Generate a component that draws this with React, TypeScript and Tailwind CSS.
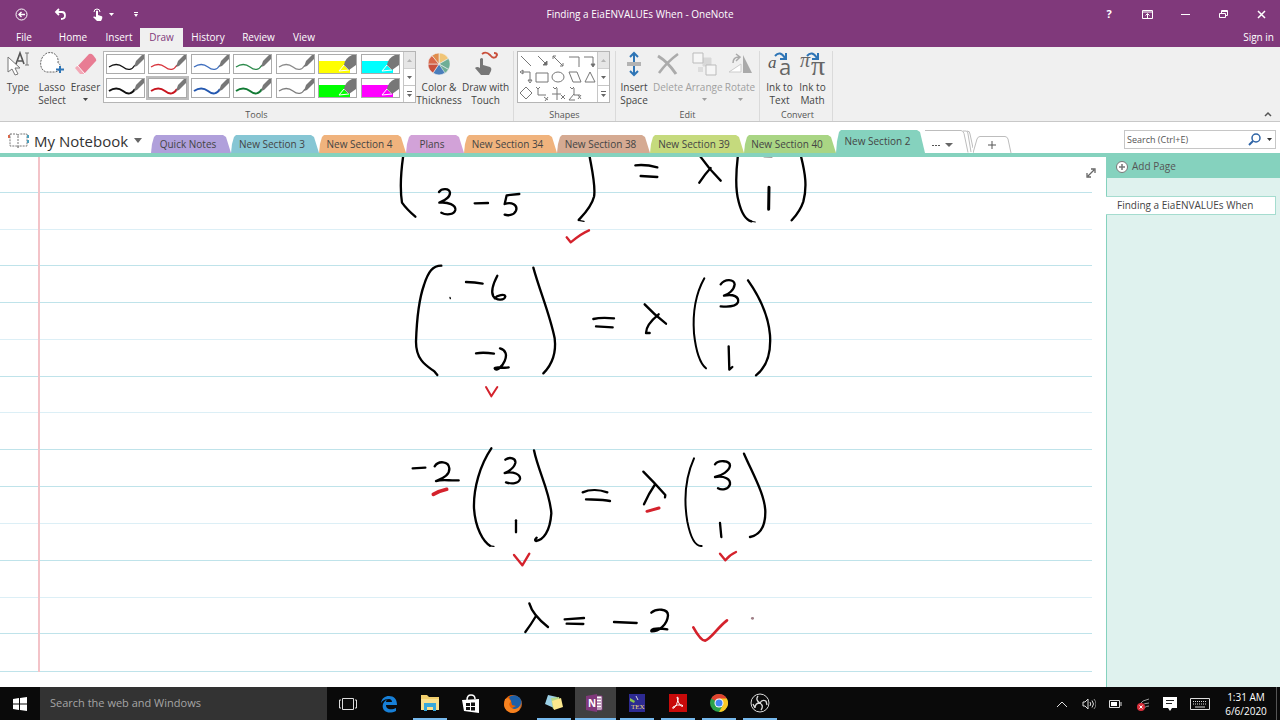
import React, { useState } from 'react';
import clsx from 'clsx';

type Stroke = { d: string; color?: string; width?: number };
type InkGroup = { x: number; y: number; strokes: Stroke[] };

const RED = '#d4222c';

const menuTabs = [
  { label: 'File', width: 'w-12' },
  { label: 'Home', width: 'w-[50px]' },
  { label: 'Insert', width: 'w-[42px]' },
  { label: 'Draw', width: 'w-[43px]' },
  { label: 'History', width: 'w-[50px]' },
  { label: 'Review', width: 'w-[51px]' },
  { label: 'View', width: 'w-10' },
];

const pens = [
  { color: '#111111', width: 1 },
  { color: '#d8343c', width: 1 },
  { color: '#3f6fbf', width: 1 },
  { color: '#2c8a4b', width: 1 },
  { color: '#8a8a8a', width: 1 },
  { color: '#ffff00', marker: true },
  { color: '#00ffff', marker: true },
  { color: '#111111', width: 2 },
  { color: '#c8141e', width: 2 },
  { color: '#2458b0', width: 2 },
  { color: '#117a34', width: 2 },
  { color: '#7d7d7d', width: 1 },
  { color: '#00ff00', marker: true },
  { color: '#ff00ff', marker: true },
];

const sections = [
  { label: 'Quick Notes', bg: 'bg-[#b0a0db]', width: 'w-20' },
  { label: 'New Section 3', bg: 'bg-[#86c6d4]', width: 'w-[88px]' },
  { label: 'New Section 4', bg: 'bg-[#f0b37d]', width: 'w-[87px]' },
  { label: 'Plans', bg: 'bg-[#d2a2d8]', width: 'w-[58px]' },
  { label: 'New Section 34', bg: 'bg-[#f0b37d]', width: 'w-[93px]' },
  { label: 'New Section 38', bg: 'bg-[#d5aa92]', width: 'w-[93px]' },
  { label: 'New Section 39', bg: 'bg-[#c5da7d]', width: 'w-[94px]' },
  { label: 'New Section 40', bg: 'bg-[#a9d584]', width: 'w-[92px]' },
  { label: 'New Section 2', bg: 'bg-[#85d2be]', width: 'w-[89px]' },
];

const ruleLines = [192, 229, 265, 302, 339, 376, 412, 449, 486, 523, 560, 597, 633, 671];
const paleRules = [229, 339, 412, 523, 597];

// Pen strokes are stored at three units per page pixel, relative to each group's corner
const ink: InkGroup[] = [
  {
    x: 390,
    y: 150,
    strokes: [
      { d: 'M40 15C32 70 30 120 36 158Q50 178 76 200' },
      { d: 'M147 126C155 114 178 114 180 128C180 145 160 152 148 158C175 155 198 165 196 180C192 195 168 196 154 188' },
      { d: 'M254 160L294 159' },
      { d: 'M388 132L350 136L344 162C365 155 384 165 378 182C372 197 352 197 344 194' },
      { d: 'M598 15C606 60 618 110 612 140C604 172 575 200 566 210' },
      { d: 'M566 211L582 214', width: 4 },
      { d: 'M736 46C760 43 780 46 802 52M752 78L802 81' },
      { d: 'M928 15Q955 55 992 92M962 54Q945 72 928 98' },
      { d: 'M1044 15C1036 80 1036 120 1046 155C1056 195 1070 210 1084 214' },
      { d: 'M1084 214L1096 216', width: 3 },
      { d: 'M1122 21L1146 22', width: 3, color: '#888888' },
      { d: 'M1137 112L1136 178', width: 9 },
      { d: 'M1232 15C1246 70 1252 110 1240 155C1230 185 1215 200 1205 211' },
      { d: 'M530 262L542 277C560 262 580 248 597 241', color: RED },
    ],
  },
  {
    x: 400,
    y: 255,
    strokes: [
      { d: 'M124 32C98 32 85 50 72 90C56 135 50 200 48 260C48 320 85 335 104 350L112 360' },
      { d: 'M198 81Q225 82 248 86' },
      { d: 'M292 62C280 85 272 110 280 124C290 138 314 136 316 124C314 116 292 120 284 130' },
      { d: 'M150 127L151 131', width: 4 },
      { d: 'M400 38C420 110 450 180 464 250C470 300 455 330 430 355' },
      { d: 'M228 295Q250 291 282 296' },
      { d: 'M300 280C318 285 322 300 314 318C306 338 286 350 284 340C286 332 310 342 326 337' },
      { d: 'M580 192C600 187 620 188 642 190M588 214L638 217' },
      { d: 'M734 148Q762 178 798 206M776 178C755 195 738 215 738 234L749 234' },
      { d: 'M913 70C885 120 878 180 882 235C888 290 900 325 918 340', width: 6 },
      { d: 'M962 88C975 70 1002 72 1004 88C1002 106 985 118 972 122C1000 116 1018 125 1014 142C1008 156 985 156 962 154' },
      { d: 'M986 274L988 344L997 336' },
      { d: 'M1044 76C1075 120 1105 180 1110 240C1114 300 1095 340 1068 361' },
      { d: 'M258 396L274 424L292 396', color: RED, width: 6 },
    ],
  },
  {
    x: 400,
    y: 435,
    strokes: [
      { d: 'M38 100L76 98' },
      { d: 'M104 94C115 76 146 78 148 100C150 120 130 130 108 138C130 132 150 138 176 136' },
      { d: 'M100 178Q118 168 140 163', color: RED, width: 11 },
      { d: 'M274 40C240 90 220 160 222 220C226 280 250 320 270 332' },
      { d: 'M268 331Q275 334 282 334', width: 4 },
      { d: 'M316 74C330 64 348 70 346 84C342 100 328 108 314 114C340 108 362 118 360 132C356 146 336 148 318 142' },
      { d: 'M348 256L348 292' },
      { d: 'M402 46C415 110 450 170 454 235C450 290 430 315 408 318Q402 315 410 308' },
      { d: 'M342 360L367 391L388 356', color: RED },
      { d: 'M548 172C570 162 600 164 622 172M558 193C580 194 610 194 630 198' },
      { d: 'M730 110Q765 145 796 180L795 187M764 150C750 170 740 190 732 208' },
      { d: 'M741 229L777 219', color: RED, width: 9 },
      { d: 'M882 70C855 130 852 200 862 260C872 310 885 335 905 333', width: 6 },
      { d: 'M945 88C955 74 990 76 990 92C988 108 965 122 945 126C975 122 992 132 990 148C985 164 965 166 954 160' },
      { d: 'M960 264L964 306' },
      { d: 'M1032 56C1060 120 1095 180 1096 230C1096 275 1080 300 1050 306' },
      { d: 'M960 356L976 376Q988 360 1008 351', color: RED },
    ],
  },
  {
    x: 500,
    y: 590,
    strokes: [
      { d: 'M88 40C95 65 120 92 144 111M108 78C98 95 88 110 76 126' },
      { d: 'M194 88L252 84M200 101L250 102' },
      { d: 'M342 96L410 99' },
      { d: 'M454 68C470 54 504 56 504 76C502 105 475 125 454 124C450 114 480 114 502 118' },
      { d: 'M580 112C590 130 605 152 615 152C635 145 650 115 681 91', color: RED, width: 8 },
      { d: 'M757 85L758 85', color: '#a08088', width: 8 },
    ],
  },
];

function InkLayer() {
  return (
    <svg className="absolute left-0 top-0" width="1106" height="529" viewBox="0 157 1106 529" fill="none" role="img" aria-label="Handwritten working for the eigenvalue">
      {ink.map((group) => (
        <g key={group.y} transform={`translate(${group.x} ${group.y}) scale(0.33333)`} strokeLinecap="round" strokeLinejoin="round">
          {group.strokes.map((s) => (
            <path key={s.d} d={s.d} stroke={s.color ?? '#000'} strokeWidth={s.width ?? 7} />
          ))}
        </g>
      ))}
    </svg>
  );
}

function Caret({ className }: { className?: string }) {
  return (
    <svg className={className} width="8" height="5" viewBox="0 0 8 5">
      <path d="M0 0h8L4 5z" fill="currentColor" />
    </svg>
  );
}

function PenSwatch({ color, width, marker }: { color: string; width?: number; marker?: boolean }) {
  return (
    <svg width="37" height="18" viewBox="0 0 37 18" fill="none">
      {marker ? (
        <>
          <path d="M0 6h31v12H0z" fill={color} />
          <path d="M20 16l5-6 5 5z" stroke="#fff" fill={color} />
          <path d="M25 10q1-7 8-10h4v10l-7 5z" fill="#777" />
        </>
      ) : (
        <>
          <path d="M2 12C8 8 12 9 16 12C21 16 25 15 28 10" stroke={color} strokeWidth={width === 2 ? 2 : 1.3} />
          <path d="M27 12l2-6 6-6h2v4l-7 7z" fill="#777" />
        </>
      )}
    </svg>
  );
}

function GalleryScroll() {
  return (
    <div className="flex w-3 flex-col border-l border-[#c6c6c6] text-[#666]">
      <button aria-label="Scroll up" className="flex flex-1 items-center justify-center border-b border-[#d0d0d0] bg-[#e6e6e6] text-[#b5b5b5]">
        <svg width="5" height="3" viewBox="0 0 5 3"><path d="M0 3h5L2.500 0z" fill="currentColor" /></svg>
      </button>
      <button aria-label="Scroll down" className="flex flex-1 items-center justify-center border-b border-[#c6c6c6] bg-white">
        <svg width="5" height="3" viewBox="0 0 5 3"><path d="M0 0h5L2.500 3z" fill="currentColor" /></svg>
      </button>
      <button aria-label="More" className="flex flex-1 items-center justify-center bg-white">
        <svg width="5" height="6" viewBox="0 0 5 6"><path d="M0 0h5v1H0zM0 3h5L2.500 6z" fill="currentColor" /></svg>
      </button>
    </div>
  );
}

function RibbonButton({ lines, width, disabled, caret, children }: {
  lines: string[];
  width: string;
  disabled?: boolean;
  caret?: boolean;
  children: React.ReactNode;
}) {
  return (
    <button disabled={disabled} className={clsx('flex shrink-0 flex-col items-center leading-[13px] whitespace-nowrap', width, disabled ? 'text-[#a0a0a0]' : 'text-[#444]')}>
      <span className="mb-1 flex h-[26px] items-center justify-center">{children}</span>
      {lines.map((l) => <span key={l}>{l}</span>)}
      {caret && <svg className="mt-1" width="5" height="3" viewBox="0 0 5 3"><path d="M0 0h5L2.500 3z" fill="currentColor" /></svg>}
    </button>
  );
}

function Group({ label, className, children }: { label: string; className?: string; children: React.ReactNode }) {
  return (
    <div className={clsx('flex shrink-0 flex-col border-r border-[#dadada]', className)}>
      <div className="flex h-[58px]">{children}</div>
      <span className="text-center text-[9px] leading-3 text-[#555]">{label}</span>
    </div>
  );
}

function ShapesArt() {
  return (
    <svg width="80" height="50" viewBox="0 0 80 50" fill="none" stroke="#777" strokeWidth="1">
      <path d="M3 4l10 10M20 4l9 9M35 4l10 10M35 7V4h3M45 11v3h-3" />
      <path d="M29 9v4h-4z" fill="#666" />
      <path d="M51 5h10v10M66 5h9v8" />
      <path d="M73 12h4l-2 3z" fill="#666" />
      <path d="M4 20h8v9M5 18l-3 2 3 2zM10 28h4l-2 3z" />
      <path d="M18 21h12v9H18zM51 20h8l4 10h-8zM72 20l5 10H67z" />
      <ellipse cx="40" cy="25" rx="6" ry="5" />
      <path d="M8 35l6 6-6 6-6-6z" />
      <path d="M18 35l2 2 2-2M20 37v6h8M26 45l4 3M30 45l-3 4" />
      <path d="M35 35l2 2 2-2M39 36v12M34 42h9M43 43l4 4M47 43l-4 4" />
      <path d="M52 35l2 2 2-2M56 36v7h6M56 42l-5 6h6M60 43l3 4M63 43l-3 4" />
    </svg>
  );
}

function Ribbon() {
  return (
    <div className="relative flex h-[75px] border-b border-[#c8c8c8] bg-[#f0f0f0] pt-1 text-[10px]">
      <Group label="Tools" className="w-[514px]">
        <RibbonButton lines={['Type']} width="w-9">
          <svg width="26" height="26" viewBox="0 0 26 26" fill="none">
            <path d="M3 6v15l4-3 3 6 3-1-3-6h5z" fill="#fff" stroke="#777" />
            <path d="M11 13l4-11 4 11M13 10h5" stroke="#555" strokeWidth="1.600" />
            <path d="M20 2h4M22 2v12M20 14h4" stroke="#777" />
          </svg>
        </RibbonButton>
        <RibbonButton lines={['Lasso', 'Select']} width="w-8">
          <svg width="26" height="26" viewBox="0 0 26 26" fill="none">
            <path d="M8 2C-1 7 0 20 8 21h8c6-1 7-7 3-9C20 5 15 0 8 2z" fill="#fff" stroke="#666" strokeDasharray="2 1" />
            <path d="M21 15v7M17 18.500h8" stroke="#2e75b6" strokeWidth="2" />
          </svg>
        </RibbonButton>
        <RibbonButton lines={['Eraser']} width="w-[35px]" caret>
          <svg width="24" height="24" viewBox="0 0 24 24">
            <path d="M2 16L15 2q2-1 4 1l3 4q1 2-1 3L10 22z" fill="#e87c93" />
            <path d="M1 16l2-2 8 8H6z" fill="#f3a9b7" />
            <path d="M3 13l8 9" stroke="#fff" />
          </svg>
        </RibbonButton>
        <div className="flex h-[52px] w-[313px] border border-[#b5b5b5] bg-white">
          <div className="grid flex-1 grid-cols-7 content-start gap-y-1 pl-0.5 pt-0.5">
            {pens.map((pen, i) => (
              <button
                key={i}
                aria-label={`Pen ${i + 1}`}
                className={clsx('h-5 w-[39px] border', i === 8 ? 'border-[#aaa] outline-2 outline-[#bdbdbd]' : 'border-[#ababab]')}
              >
                <PenSwatch {...pen} />
              </button>
            ))}
          </div>
          <GalleryScroll />
        </div>
        <RibbonButton lines={['Color &', 'Thickness']} width="w-[46px]">
          <svg width="22" height="22" viewBox="-11 -11 22 22" stroke="#f0f0f0" strokeWidth="0.600">
            <path d="M0 0V-11A11 11 0 0 1 9.500 -5.500z" fill="#f0c577" />
            <path d="M0 0L9.500 -5.500A11 11 0 0 1 9.500 5.500z" fill="#6fae96" />
            <path d="M0 0L9.500 5.500A11 11 0 0 1 5 10z" fill="#6fae96" />
            <path d="M0 0L6 9A11 11 0 0 1 -6 9z" fill="#4a7ebb" />
            <path d="M0 0L-6 9A11 11 0 0 1 -11 0z" fill="#c9503c" />
            <path d="M0 0L-11 0A11 11 0 0 1 -7 -8.500z" fill="#d9684a" />
            <path d="M0 0L-7 -8.500A11 11 0 0 1 0 -11z" fill="#e08d4c" />
          </svg>
        </RibbonButton>
        <RibbonButton lines={['Draw with', 'Touch']} width="w-[47px]">
          <svg width="26" height="26" viewBox="0 0 26 26" fill="none">
            <path d="M9 3c3-2 5-2 8 1 3 4 6 3 7 0 0-1-1-2-3-2" stroke="#c9503c" strokeWidth="2" />
            <path d="M7 8q2-2 3 0v6l7 2q2 1 1 4l-2 4H8l-6-7q2-2 5 0z" fill="#777" />
          </svg>
        </RibbonButton>
      </Group>

      <Group label="Shapes" className="w-[102px]">
        <div className="ml-[3px] flex h-[52px] w-[93px] border border-[#b5b5b5] bg-white">
          <div className="flex-1 overflow-hidden"><ShapesArt /></div>
          <GalleryScroll />
        </div>
      </Group>

      <Group label="Edit" className="w-36">
        <RibbonButton lines={['Insert', 'Space']} width="w-9">
          <svg width="16" height="26" viewBox="0 0 16 26" fill="none">
            <path d="M1 12h14M1 14h14" stroke="#777" />
            <path d="M8 11V3M4 6l4-4 4 4M8 15v8M4 20l4 4 4-4" stroke="#2e75b6" strokeWidth="2" />
          </svg>
        </RibbonButton>
        <RibbonButton lines={['Delete']} width="w-8" disabled>
          <svg width="24" height="24" viewBox="0 0 24 24" fill="none" stroke="#ababab">
            <path d="M2 4q10 6 18 18" strokeWidth="3" />
            <path d="M22 2Q11 10 3 21" strokeWidth="2.500" />
          </svg>
        </RibbonButton>
        <RibbonButton lines={['Arrange']} width="w-10" disabled caret>
          <svg width="26" height="26" viewBox="0 0 26 26" fill="#f6f6f6" stroke="#bbb">
            <path d="M12 7h8v8h-8z" fill="#d8d8d8" stroke="#d8d8d8" />
            <path d="M2 2h10v10H2zM15 14h10v10H15z" />
            <path d="M7 16h5v5H7z" fill="#ddd" stroke="none" />
          </svg>
        </RibbonButton>
        <RibbonButton lines={['Rotate']} width="w-8" disabled caret>
          <svg width="24" height="24" viewBox="0 0 24 24" fill="none">
            <path d="M1 20l12-8v8z" fill="#fff" stroke="#ccc" />
            <path d="M15 3v18h9z" fill="#aaa" />
            <path d="M5 11q0-6 6-6M8 2l4 3-4 4" stroke="#aaa" strokeWidth="1.500" />
          </svg>
        </RibbonButton>
      </Group>

      <Group label="Convert" className="w-[73px] pl-[3px]">
        <RibbonButton lines={['Ink to', 'Text']} width="w-[33px]">
          <svg className="overflow-visible" width="26" height="26" viewBox="0 0 26 26" fill="none">
            <text x="1" y="17" fontFamily="Liberation Serif" fontStyle="italic" fontSize="17" fill="#555">a</text>
            <text x="12" y="24" fontFamily="Open Sans" fontSize="22" fill="#666">a</text>
            <path d="M8 5q5-6 10 2M19 2v6h-6" stroke="#2e75b6" strokeWidth="2" />
          </svg>
        </RibbonButton>
        <RibbonButton lines={['Ink to', 'Math']} width="w-[33px]">
          <svg className="overflow-visible" width="26" height="26" viewBox="0 0 26 26" fill="none">
            <text x="0" y="16" fontFamily="Liberation Serif" fontStyle="italic" fontSize="20" fill="#666">π</text>
            <text x="11" y="24" fontFamily="Liberation Serif" fontSize="28" fill="#666">π</text>
            <path d="M7 5q5-6 10 2M18 2v6h-6" stroke="#2e75b6" strokeWidth="2" />
          </svg>
        </RibbonButton>
      </Group>

      <button aria-label="Collapse the ribbon" className="mb-1 ml-auto mr-2 self-end text-[#555]">
        <svg width="8" height="6" viewBox="0 0 8 6" fill="none"><path d="M1 5l3-3 3 3" stroke="currentColor" strokeWidth="1.500" /></svg>
      </button>
    </div>
  );
}

function TitleBar() {
  return (
    <header className="flex h-7 items-center justify-between text-white">
      <div className="flex flex-1 items-center">
        <button aria-label="Back" className="ml-[15px] mr-[26px]">
          <svg width="13" height="13" viewBox="0 0 13 13" fill="none" stroke="currentColor">
            <circle cx="6.500" cy="6.500" r="5.500" />
            <path d="M10 6.500H4M6.500 4L4 6.500 6.500 9" strokeWidth="1.400" />
          </svg>
        </button>
        <button aria-label="Undo" className="mr-[26px]">
          <svg width="13" height="12" viewBox="0 0 13 12" fill="none" stroke="currentColor" strokeWidth="1.800">
            <path d="M5 1L2 4l3 3M2 4h6q3 0 3 3.500T7 11" />
          </svg>
        </button>
        <button aria-label="Touch mode" className="mr-2 flex items-center">
          <svg width="10" height="13" viewBox="0 0 10 13" fill="currentColor">
            <path d="M3 3q1-1 2 0v4l3 1q2 0 1 3l-1 2H4L0 9q1-1 3 0z" />
            <path d="M1 4q0-3 3-3t3 3" fill="none" stroke="currentColor" />
          </svg>
          <svg className="ml-1.5" width="5" height="3" viewBox="0 0 5 3"><path d="M0 0h5L2.500 3z" fill="currentColor" /></svg>
        </button>
        <button aria-label="Customize toolbar" className="ml-3">
          <svg width="4" height="5" viewBox="0 0 4 5"><path d="M0 0h4v1H0zM0 2h4L2 5z" fill="currentColor" /></svg>
        </button>
      </div>
      <h1 className="text-[10px] leading-7">Finding a EiaENVALUEs When - OneNote</h1>
      <div className="flex flex-1 justify-end">
        <button className="w-[38px] text-[11px] font-bold" aria-label="Help">?</button>
        <button className="flex w-[38px] items-center justify-center" aria-label="Ribbon display options">
          <svg width="11" height="9" viewBox="0 0 11 9" fill="none" stroke="currentColor"><path d="M.5.5h10v8H.5zM0 2h11M5.500 8V4M3.500 5.500l2-2 2 2" /></svg>
        </button>
        <button className="flex w-[38px] items-center justify-center" aria-label="Minimize">
          <svg width="9" height="5" viewBox="0 0 9 5"><path d="M0 2h9v1H0z" fill="currentColor" /></svg>
        </button>
        <button className="flex w-[38px] items-center justify-center" aria-label="Restore">
          <svg width="9" height="9" viewBox="0 0 9 9" fill="none" stroke="currentColor"><path d="M.5 3.500h6v4h-6zM2.500 3V.5h6v5H7M2 1.500h7" /></svg>
        </button>
        <button className="flex w-[38px] items-center justify-center" aria-label="Close">
          <svg width="9" height="9" viewBox="0 0 9 9" fill="none" stroke="currentColor" strokeWidth="1.500"><path d="M1 1l7 7M8 1L1 8" /></svg>
        </button>
      </div>
    </header>
  );
}

function SectionBar({ active, onSelect }: { active: string; onSelect: (s: string) => void }) {
  return (
    <nav className="flex h-[31px] items-end bg-white text-[10px] text-[#444]">
      <button className="flex h-[25px] w-[151px] items-center pl-2 text-[#333]">
        <svg width="21" height="17" viewBox="0 0 21 17" fill="none" stroke="#777">
          <path d="M2 2h6q2 0 2 2 0-2 2-2h7v12h-7q-2 0-2 2 0-2-2-2H2zM10 4v11" fill="#fff" strokeDasharray="2 1" />
          <path d="M1 3v3" stroke="#d9684a" strokeWidth="2" />
          <path d="M20 3v3M20 8v3" stroke="#4a9ebb" strokeWidth="2" />
        </svg>
        <span className="ml-[5px] text-[15px] leading-5">My Notebook</span>
        <Caret className="ml-1.5 text-[#666]" />
      </button>
      {sections.map((s) => (
        <button
          key={s.label}
          onClick={() => onSelect(s.label)}
          className={clsx(
            'shrink-0 pr-1.5 whitespace-nowrap [clip-path:polygon(0_100%,1px_50%,3px_2px,5px_0,calc(100%-8px)_0,calc(100%-5px)_2px,100%_100%)]',
            s.width,
            s.bg,
            s.label === active ? 'h-[23px]' : 'h-[18px]',
          )}
        >
          {s.label}
        </button>
      ))}
      <button aria-label="More sections" className="flex h-[23px] w-12 shrink-0 items-center">
        <svg width="48" height="23" viewBox="0 0 48 23" fill="none" stroke="#bdbdbd">
          <path d="M0 .5h36q2 0 3 3l4 19M38 1h3q2 0 2 3l3 18M42 1q3 0 3 3l3 14" />
          <path d="M7 15h2v1H7zM10 15h2v1h-2zM13 15h2v1h-2z" fill="#555" stroke="none" />
          <path d="M20 13h8l-4 4z" fill="#666" stroke="none" />
        </svg>
      </button>
      <button aria-label="Create a new section" className="h-[17px] shrink-0">
        <svg width="39" height="17" viewBox="0 0 39 17" fill="none" stroke="#bdbdbd">
          <path d="M0 17L4 3q1-2.500 3-2.500h25q2 0 3 2.500l3 14" />
          <path d="M15 9h8M19 5v8" stroke="#555" />
        </svg>
      </button>
      <form className="mb-1 ml-auto mr-1 flex h-[19px] w-[152px] items-center border border-[#c6c6c6] bg-white" onSubmit={(e) => e.preventDefault()}>
        <input aria-label="Search" placeholder="Search (Ctrl+E)" className="min-w-0 flex-1 pl-[2px] text-[9px] outline-none placeholder:text-[#555]" />
        <button aria-label="Search notes" className="flex items-center gap-1.5 pr-[3px]">
          <svg width="13" height="13" viewBox="0 0 13 13" fill="none" stroke="#2e64a6" strokeWidth="1.500"><circle cx="8" cy="5" r="4" /><path d="M5 8l-4 4" strokeWidth="2" /></svg>
          <svg width="5" height="3" viewBox="0 0 5 3"><path d="M0 0h5L2.500 3z" fill="#333" /></svg>
        </button>
      </form>
    </nav>
  );
}

const taskbarApps = [
  {
    name: 'Task View',
    icon: <svg width="18" height="14" viewBox="0 0 18 14" fill="none" stroke="#ddd"><path d="M3.500 1.500h11v11h-11zM2 3H.5v8H2M16 3h1.500v8H16" /></svg>,
  },
  {
    name: 'Edge',
    icon: (
      <svg width="18" height="18" viewBox="0 0 18 18" fill="none">
        <path d="M1 8C2 3 5 1 9 1c5 0 8 3 8 9H6c0 5 6 5 10 3v3C8 20 1 16 3 9c1-2 2-4 5-5-3 0-5 1-7 4zm5-1h6c0-4-6-4-6 0z" fill="#1780d8" />
      </svg>
    ),
  },
  {
    name: 'File Explorer',
    open: true,
    icon: (
      <svg width="20" height="18" viewBox="0 0 20 18">
        <path d="M1 1h6l2 2h10v13H1z" fill="#f2cf6c" /><path d="M1 5h18v11H1z" fill="#fbe18f" /><path d="M4 9h12v8h-3v-4H7v4H4z" fill="#39a9dc" />
      </svg>
    ),
  },
  {
    name: 'Store',
    icon: (
      <svg width="20" height="20" viewBox="0 0 20 20">
        <path d="M1 6l17-1v14L3 17z" fill="#fff" /><path d="M6 6q0-5 4-5t4 4" fill="none" stroke="#fff" strokeWidth="1.500" />
        <path d="M5 9h4v3H5zM10 8.500h4V12h-4zM5 13h4v3H5zM10 13h4v3.500h-4z" fill="#111" />
      </svg>
    ),
  },
  {
    name: 'Firefox',
    icon: (
      <svg width="20" height="20" viewBox="0 0 20 20">
        <circle cx="10" cy="10" r="9" fill="#e66000" /><path d="M6 3q6-4 11 1 3 5 0 10-4 3-8 0l4-2-4-1-1-4z" fill="#1c5fa8" />
        <path d="M2 5l3-1 3 3-2 3q1 5 6 5 5-1 6-6 0 9-8 10-8-1-9-8z" fill="#f58220" />
      </svg>
    ),
  },
  {
    name: 'Sticky Notes',
    open: true,
    icon: (
      <svg width="20" height="18" viewBox="0 0 20 18">
        <path d="M4 1l9 2-3 11-9-4z" fill="#9bd0e6" /><path d="M7 4l8-1 2 9-8 3z" fill="#b5d98a" /><path d="M8 7l9-3 2 9-9 3z" fill="#fbe88d" />
      </svg>
    ),
  },
  {
    name: 'OneNote',
    open: true,
    active: true,
    icon: (
      <svg width="20" height="18" viewBox="0 0 20 18">
        <path d="M10 2h7v14h-7z" fill="#fff" stroke="#80397b" /><path d="M12 5h4M12 8h4M12 11h4M12 14h4" stroke="#80397b" />
        <path d="M1 2l11-2v18L1 16z" fill="#80397b" /><text x="3" y="13" fontFamily="Open Sans" fontWeight="700" fontSize="10" fill="#fff">N</text>
      </svg>
    ),
  },
  {
    name: 'TeX editor',
    open: true,
    icon: (
      <svg width="18" height="18" viewBox="0 0 18 18">
        <path d="M1 0h16v18H1z" fill="#2d2a92" /><path d="M2 4l5 3-1 2-4-2z" fill="#8bc34a" /><path d="M8 2l2 4" stroke="#ddd" />
        <text x="3" y="15" fontFamily="Liberation Serif" fontSize="7" fill="#f0d878">TEX</text>
      </svg>
    ),
  },
  {
    name: 'Adobe Reader',
    open: true,
    icon: (
      <svg width="18" height="18" viewBox="0 0 18 18" fill="none">
        <path d="M0 0h18v18H0z" fill="#c80a0a" />
        <path d="M8 3q2 0 1 3-1 5-4 8-2 1-1-1 4-3 9-2 2 1 0 1.500Q9 10 8 3z" stroke="#fff" />
      </svg>
    ),
  },
  {
    name: 'Chrome',
    open: true,
    icon: (
      <svg width="18" height="18" viewBox="0 0 18 18">
        <circle cx="9" cy="9" r="9" fill="#2ba24c" /><path d="M9 9l-7.800-4.500A9 9 0 0 1 16.800 4.500z" fill="#e0432f" /><path d="M9 4.500h7.800A9 9 0 0 1 9 18l4-7z" fill="#fbc926" />
        <circle cx="9" cy="9" r="4.500" fill="#fff" /><circle cx="9" cy="9" r="3.500" fill="#4285f4" />
      </svg>
    ),
  },
  {
    name: 'OBS Studio',
    open: true,
    icon: (
      <svg width="20" height="20" viewBox="0 0 20 20" fill="none" stroke="#ddd">
        <circle cx="10" cy="10" r="9" />
        <path d="M8 3q-3 4 2 7 2-4 6-2M10 10q-5 0-5 5M10 10q4 3 1 7M16 8l1 4M5 15l-2-4" strokeWidth="1.300" />
      </svg>
    ),
  },
];

function Taskbar() {
  return (
    <footer className="flex h-[33px] shrink-0 bg-[#0a0a0a] text-white">
      <button aria-label="Start" className="flex w-10 items-center justify-center">
        <svg width="14" height="14" viewBox="0 0 14 14" fill="#fff"><path d="M0 2l6-1v5.500H0zM7 1l7-1v6.500H7zM0 7.500h6V13l-6-1zM7 7.500h7V14l-7-1z" /></svg>
      </button>
      <input aria-label="Search the web and Windows" placeholder="Search the web and Windows" className="w-[287px] bg-[#333] pl-2.5 text-[11px] outline-none placeholder:text-[#a5a5a5]" />
      <div className="grid w-[454px] grid-cols-11">
        {taskbarApps.map((app) => (
          <button key={app.name} aria-label={app.name} className={clsx('flex flex-col items-center', app.active && 'bg-[#404040]')}>
            <span className="flex flex-1 items-center">{app.icon}</span>
            {app.open && <span className={clsx('h-0.5 bg-[#76b9ed]', app.active ? 'w-full' : 'w-[34px]')} />}
          </button>
        ))}
      </div>
      <div className="ml-auto flex items-center">
        <button aria-label="Show hidden icons" className="flex w-[27px] justify-center">
          <svg width="12" height="8" viewBox="0 0 12 8" fill="none" stroke="#ddd"><path d="M1 7l5-5 5 5" /></svg>
        </button>
        <button aria-label="Volume" className="flex w-[27px] justify-center">
          <svg width="14" height="12" viewBox="0 0 14 12" fill="none" stroke="#ddd"><path d="M1 4h2l3-3v10L3 8H1zM8 4q1.500 2 0 4M10 2.500q3 3.500 0 7" /><path d="M12 1q4 5 0 10" stroke="#888" /></svg>
        </button>
        <button aria-label="Battery" className="flex w-[27px] justify-center">
          <svg width="13" height="8" viewBox="0 0 13 8" fill="none" stroke="#ddd"><path d="M.5.5h10v7H.5z" /><path d="M2 2h6v4H2z" fill="#fff" stroke="none" /><path d="M12 2v4" /></svg>
        </button>
        <button aria-label="Network" className="flex w-[27px] justify-center">
          <svg width="14" height="14" viewBox="0 0 14 14" fill="none" stroke="#999">
            <path d="M3 8q3-5 10-6M5 9q3-3 8-3M8 11q2-2 5-2" />
            <circle cx="5" cy="10" r="4" fill="#d9303c" stroke="none" /><path d="M3.500 8.500l3 3M6.500 8.500l-3 3" stroke="#fff" />
          </svg>
        </button>
        <button aria-label="Notifications" className="flex w-[27px] justify-center">
          <svg width="14" height="14" viewBox="0 0 14 14"><path d="M0 0h14v11H9l-2 3-2-3H0z" fill="#fff" /><path d="M3 3h8v1H3zM3 6h6v1H3z" fill="#222" /></svg>
        </button>
        <button aria-label="Touch keyboard" className="flex w-[33px] justify-center">
          <svg width="20" height="12" viewBox="0 0 20 12" fill="none" stroke="#ddd"><path d="M.5.5h19v11H.5z" /><path d="M3 3.500h14M3 6h14" strokeDasharray="1 1" /><path d="M5 9h10" /></svg>
        </button>
        <time className="w-[60px] text-center text-[10px] leading-[14px]">
          <span className="block">1:31 AM</span>
          <span className="block">6/6/2020</span>
        </time>
        <div className="mr-[3px] h-[33px] border-r border-[#555]" />
      </div>
    </footer>
  );
}

export default function App() {
  const [activeSection, setActiveSection] = useState('New Section 2');

  return (
    <div className="flex h-screen flex-col overflow-hidden bg-white font-['Open_Sans','Noto_Sans',sans-serif]">
      <div className="bg-[#80397b]">
        <TitleBar />
        <div className="flex h-[19px] text-[10px] text-white">
          {menuTabs.map((tab) => (
            <button key={tab.label} className={clsx('leading-[19px]', tab.width, tab.label === 'Draw' && 'bg-[#f0f0f0] text-[#80397b]')}>
              {tab.label}
            </button>
          ))}
          <a href="#" className="ml-auto mr-[6px] leading-[19px]">Sign in</a>
        </div>
      </div>
      <Ribbon />
      <SectionBar active={activeSection} onSelect={setActiveSection} />
      <div className="h-1 shrink-0 bg-[#85d2be]" />

      <div className="flex min-h-0 flex-1">
        <main className="relative min-w-0 flex-1 overflow-hidden bg-white">
          <svg className="absolute left-0 top-0" width="1106" height="529" viewBox="0 157 1106 529" shapeRendering="crispEdges">
            {ruleLines.map((y) => (
              <path key={y} d={`M0 ${y}h1092v1H0z`} fill={paleRules.includes(y) ? '#dceff6' : '#bfe3ea'} />
            ))}
            <path d="M38 157h2v515h-2z" fill="#f3c3c8" />
          </svg>
          <InkLayer />
          <button aria-label="Full page view" className="absolute right-2.5 top-[11px] text-[#666]">
            <svg width="10" height="10" viewBox="0 0 10 10" fill="none" stroke="currentColor" strokeWidth="1.300"><path d="M2 8l6-6M5 1h4v4M1 5v4h4" /></svg>
          </button>
        </main>

        <aside className="w-[174px] shrink-0 border-l border-[#85d2be] bg-[#dff2ee]">
          <button className="flex h-[21px] w-full items-center gap-1 bg-[#85d2be] pb-0.5 pl-[9px] text-[10px] text-[#555]">
            <svg width="12" height="12" viewBox="0 0 12 12" fill="#fff" stroke="#777"><circle cx="6" cy="6" r="5.500" /><path d="M3 6h6M6 3v6" strokeWidth="1.500" /></svg>
            Add Page
          </button>
          <a href="#" className="-ml-px mr-1 mt-[18px] block h-[19px] truncate border border-l-0 border-[#a5dccf] bg-white pl-[11px] text-[10px] leading-4 text-[#444]">
            Finding a EiaENVALUEs When
          </a>
        </aside>
      </div>
      <Taskbar />
    </div>
  );
}
